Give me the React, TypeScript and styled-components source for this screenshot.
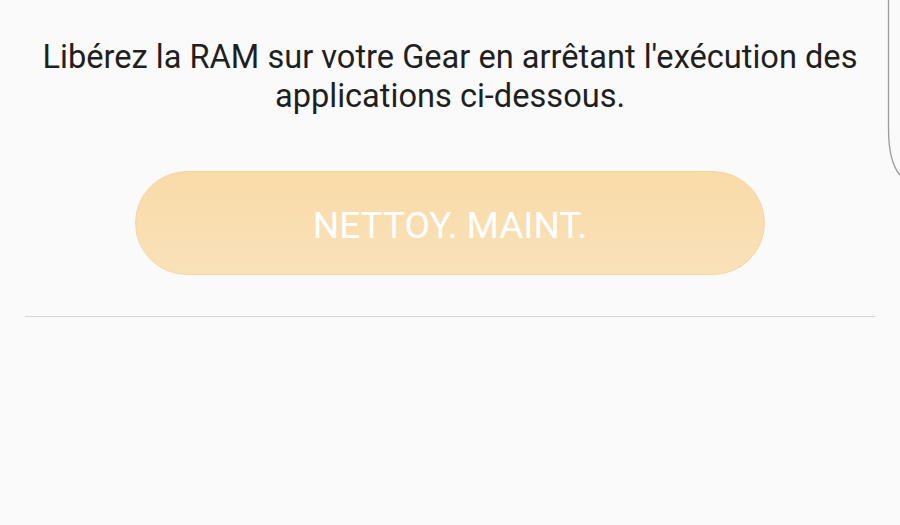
import React from "react";
import styled, { createGlobalStyle } from "styled-components";

const Global = createGlobalStyle`
  html, body { margin: 0; padding: 0; background: #fafafa; }
  body { font-family: Roboto, "Noto Sans", sans-serif; }
`;

const Page = styled.div`
  position: relative;
  width: 900px;
  height: 525px;
  background: #fafafa;
  overflow: hidden;
  display: flex;
  flex-direction: column;
  align-items: center;
`;

const Message = styled.p`
  margin: 38px 0 0;
  width: 880px;
  text-align: center;
  font-size: 32.6px;
  line-height: 39px;
  color: #1f1f1f;
`;

const CleanButton = styled.button`
  margin-top: 55px;
  width: 630px;
  height: 104px;
  border-radius: 52px;
  border: 1.5px solid #f7d7a0;
  background: linear-gradient(#f9dba8, #f9e1b9);
  color: #ffffff;
  font-family: Roboto, sans-serif;
  font-size: 37px;
  padding: 4px 0 0;
  cursor: pointer;
`;

const Divider = styled.hr`
  margin: 41px 0 0;
  width: 850px;
  border: none;
  border-top: 1px solid #d3d3d3;
  height: 0;
`;

const EdgeCurve = styled.svg`
  position: absolute;
  top: 0;
  right: 0;
`;

export default function App() {
  return (
    <>
      <Global />
      <Page>
        <Message>
          Libérez la RAM sur votre Gear en arrêtant l'exécution des applications ci-dessous.
        </Message>
        <CleanButton>NETTOY. MAINT.</CleanButton>
        <Divider />
        <EdgeCurve width="20" height="180" viewBox="0 0 20 180">
          <path d="M8.5 0 V128 Q8.5 162 20 175" fill="none" stroke="#9a9a9a" strokeWidth="1.3" />
        </EdgeCurve>
      </Page>
    </>
  );
}
